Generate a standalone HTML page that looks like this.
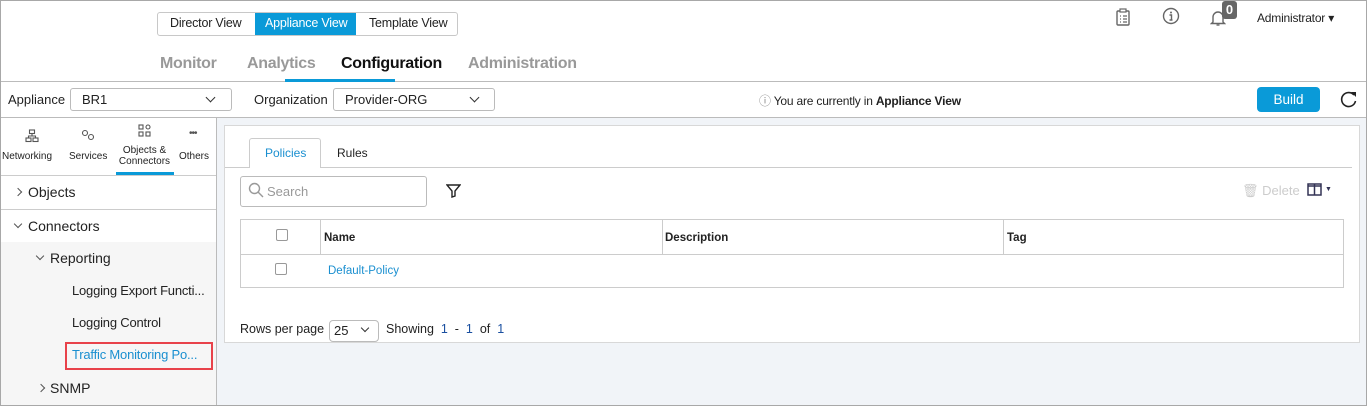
<!DOCTYPE html>
<html><head><meta charset="utf-8"><style>
*{box-sizing:border-box;margin:0;padding:0}
body{width:1367px;height:406px;overflow:hidden;font-family:"Liberation Sans",sans-serif;color:#222;background:#fff;position:relative}
.a{position:absolute}
.frame{left:0;top:0;width:1367px;height:406px;border:1px solid #a8a8a8;pointer-events:none;z-index:9}
.t{font-size:13px;white-space:nowrap}
.sel{border:1px solid #bbb;border-radius:3px;background:#fff}
.chev{width:7px;height:7px;border-right:1.5px solid #333;border-bottom:1.5px solid #333;transform:rotate(45deg)}
.chr{width:6px;height:6px;border-right:1px solid #555;border-bottom:1px solid #555;transform:rotate(-45deg)}
.chd{width:6px;height:6px;border-right:1px solid #555;border-bottom:1px solid #555;transform:rotate(45deg)}
.cb{width:12px;height:12px;border:1px solid #999;border-radius:2px;background:#fff}
</style></head><body>
<div class="a frame"></div>
<div class="a" style="left:157px;top:12px;width:301px;height:24px;border:1px solid #c8c8c8;border-radius:3px"></div>
<div class="a" style="left:255px;top:13px;width:101px;height:22px;background:#0a9ad8"></div>
<div class="a t" style="left:170px;top:16px;font-size:12.5px;letter-spacing:-0.2px">Director View</div>
<div class="a t" style="left:265px;top:16px;font-size:12.5px;letter-spacing:-0.2px;color:#fff">Appliance View</div>
<div class="a t" style="left:369px;top:16px;font-size:12.5px;letter-spacing:-0.2px">Template View</div>
<svg class="a" style="left:1115px;top:8px" width="16" height="18" viewBox="0 0 16 18"><rect x="2" y="3" width="12" height="14" rx="1" fill="none" stroke="#666" stroke-width="1.4"/><rect x="5" y="1" width="6" height="3" fill="#fff" stroke="#666" stroke-width="1.2"/><path d="M5 8h1M8 8h4M5 11h1M8 11h4M5 14h1M8 14h4" stroke="#666" stroke-width="1.2"/></svg>
<svg class="a" style="left:1162px;top:7px" width="18" height="18" viewBox="0 0 18 18"><circle cx="9" cy="9" r="7.5" fill="none" stroke="#666" stroke-width="1.4"/><circle cx="9" cy="5.5" r="1" fill="#666"/><path d="M7.5 8h2v5M7.5 13h3" stroke="#666" stroke-width="1.4" fill="none"/></svg>
<svg class="a" style="left:1210px;top:9px" width="16" height="18" viewBox="0 0 16 18"><path d="M3 13V8a5 5 0 0 1 10 0v5l1.5 1.5h-13z" fill="none" stroke="#666" stroke-width="1.4"/><path d="M6.5 16h3" stroke="#666" stroke-width="1.4"/></svg>
<div class="a" style="left:1222px;top:1px;width:15px;height:18px;background:#666;border-radius:3px;color:#fff;font-weight:bold;font-size:13px;text-align:center;line-height:18px">0</div>
<div class="a t" style="left:1257px;top:11px;font-size:12px;letter-spacing:-0.2px">Administrator ▾</div>
<div class="a" style="left:160px;top:55px;font-size:16px;font-weight:bold;color:#999;letter-spacing:-0.3px">Monitor</div>
<div class="a" style="left:247px;top:55px;font-size:16px;font-weight:bold;color:#999;letter-spacing:-0.3px">Analytics</div>
<div class="a" style="left:341px;top:55px;font-size:16px;font-weight:bold;color:#111;letter-spacing:-0.3px">Configuration</div>
<div class="a" style="left:468px;top:55px;font-size:16px;font-weight:bold;color:#999;letter-spacing:-0.3px">Administration</div>
<div class="a" style="left:0;top:81px;width:1367px;height:1px;background:#bbb"></div>
<div class="a" style="left:285px;top:79px;width:110px;height:3px;background:#0a9ad8"></div>
<div class="a t" style="left:8px;top:92px">Appliance</div>
<div class="a sel" style="left:70px;top:88px;width:162px;height:23px"></div>
<div class="a t" style="left:82px;top:92px">BR1</div>
<div class="a chev" style="left:207px;top:94px"></div>
<div class="a t" style="left:254px;top:92px">Organization</div>
<div class="a sel" style="left:333px;top:88px;width:162px;height:23px"></div>
<div class="a t" style="left:345px;top:92px">Provider-ORG</div>
<div class="a chev" style="left:471px;top:94px"></div>
<div class="a t" style="left:759px;top:92px;font-size:12px;letter-spacing:-0.2px"><span style="color:#888">ⓘ</span> You are currently in <b>Appliance View</b></div>
<div class="a" style="left:1257px;top:87px;width:63px;height:25px;background:#0a9ad8;border-radius:4px;color:#fff;font-size:13.5px;text-align:center;line-height:25px">Build</div>
<svg class="a" style="left:1339px;top:89px" width="20" height="20" viewBox="0 0 20 20"><path d="M15 6A7 7 0 1 0 16.5 12" fill="none" stroke="#222" stroke-width="1.6"/><path d="M12 3h5v5z" fill="#222"/></svg>
<div class="a" style="left:0;top:117px;width:1367px;height:1px;background:#bbb"></div>
<div class="a" style="left:216px;top:118px;width:1px;height:288px;background:#bbb"></div>
<div class="a" style="left:217px;top:118px;width:1150px;height:288px;background:#f1f4f8"></div>
<svg class="a" style="left:25px;top:129px" width="14" height="14" viewBox="0 0 14 14" fill="none" stroke="#555" stroke-width="1.1"><rect x="4.5" y="1" width="5" height="3.5"/><rect x="1" y="9" width="5" height="3.5"/><rect x="8" y="9" width="5" height="3.5"/><path d="M7 4.5v2.5M3.5 9V7h7v2"/></svg>
<svg class="a" style="left:80px;top:128px" width="16" height="14" viewBox="0 0 16 14" fill="none" stroke="#555" stroke-width="1.1"><circle cx="5" cy="5" r="2.5"/><circle cx="11" cy="9" r="2.5"/></svg>
<svg class="a" style="left:138px;top:124px" width="14" height="14" viewBox="0 0 14 14" fill="none" stroke="#555" stroke-width="1.1"><rect x="1" y="1" width="4" height="4"/><rect x="1" y="8" width="4" height="4"/><rect x="8" y="8" width="4" height="4"/><circle cx="10" cy="3" r="2"/></svg>
<div class="a" style="left:189px;top:128px;font-size:10px;color:#555;letter-spacing:-1px">•••</div>
<div class="a" style="left:2px;top:151px;font-size:10px">Networking</div>
<div class="a" style="left:69px;top:151px;font-size:10px">Services</div>
<div class="a" style="left:116px;top:145px;font-size:10px;text-align:center;line-height:11px;width:57px">Objects &amp;<br>Connectors</div>
<div class="a" style="left:179px;top:151px;font-size:10px">Others</div>
<div class="a" style="left:116px;top:172px;width:58px;height:3px;background:#0a9ad8"></div>
<div class="a" style="left:0;top:175px;width:216px;height:1px;background:#ccc"></div>
<div class="a chr" style="left:15px;top:189px"></div>
<div class="a" style="left:28px;top:184px;font-size:14px">Objects</div>
<div class="a" style="left:0;top:209px;width:216px;height:1px;background:#ccc"></div>
<div class="a chd" style="left:15px;top:221px"></div>
<div class="a" style="left:28px;top:218px;font-size:14px">Connectors</div>
<div class="a" style="left:1px;top:242px;width:215px;height:163px;background:#f6f6f6"></div>
<div class="a chd" style="left:37px;top:253px"></div>
<div class="a" style="left:50px;top:250px;font-size:14px">Reporting</div>
<div class="a" style="left:72px;top:283px;font-size:13px;letter-spacing:-0.2px">Logging Export Functi...</div>
<div class="a" style="left:72px;top:315px;font-size:13px;letter-spacing:-0.2px">Logging Control</div>
<div class="a" style="left:65px;top:342px;width:148px;height:28px;border:2px solid #e8424a"></div>
<div class="a" style="left:72px;top:347px;font-size:13px;letter-spacing:-0.2px;color:#1a8fd0">Traffic Monitoring Po...</div>
<div class="a chr" style="left:38px;top:385px"></div>
<div class="a" style="left:50px;top:380px;font-size:14px">SNMP</div>
<div class="a" style="left:224px;top:125px;width:1136px;height:218px;background:#fff;border:1px solid #d8d8d8"></div>
<div class="a" style="left:225px;top:167px;width:1127px;height:1px;background:#ccc"></div>
<div class="a" style="left:249px;top:138px;width:72px;height:30px;border:1px solid #ccc;border-bottom:none;border-radius:3px 3px 0 0;background:#fff"></div>
<div class="a" style="left:265px;top:146px;font-size:12px;color:#1a8fd0">Policies</div>
<div class="a" style="left:337px;top:146px;font-size:12px">Rules</div>
<div class="a" style="left:240px;top:176px;width:187px;height:31px;border:1px solid #bbb;border-radius:3px"></div>
<svg class="a" style="left:248px;top:182px" width="16" height="16" viewBox="0 0 16 16" fill="none" stroke="#999" stroke-width="1.4"><circle cx="6.5" cy="6.5" r="5"/><path d="M10 10l5 5"/></svg>
<div class="a" style="left:267px;top:184px;font-size:13px;color:#999">Search</div>
<svg class="a" style="left:446px;top:184px" width="15" height="14" viewBox="0 0 15 14" fill="none" stroke="#222" stroke-width="1.4"><path d="M1 1h13L9 7v5l-3 1V7z"/></svg>
<div class="a t" style="left:1242px;top:183px;color:#ccc">🗑 Delete</div>
<svg class="a" style="left:1307px;top:183px" width="15" height="13" viewBox="0 0 15 13" fill="none" stroke="#335" stroke-width="1.5"><rect x="1" y="1" width="13" height="11"/><path d="M7.5 1v11M1 3h13"/></svg>
<div class="a" style="left:1325px;top:186px;font-size:7px;color:#335">▼</div>
<div class="a" style="left:240px;top:219px;width:1104px;height:69px;border:1px solid #ccc"></div>
<div class="a" style="left:241px;top:254px;width:1102px;height:1px;background:#ccc"></div>
<div class="a" style="left:320px;top:220px;width:1px;height:34px;background:#ccc"></div>
<div class="a" style="left:662px;top:220px;width:1px;height:34px;background:#ccc"></div>
<div class="a" style="left:1003px;top:220px;width:1px;height:34px;background:#ccc"></div>
<div class="a cb" style="left:276px;top:229px"></div>
<div class="a cb" style="left:275px;top:263px"></div>
<div class="a" style="left:324px;top:232px;font-size:11.5px;font-weight:bold">Name</div>
<div class="a" style="left:665px;top:232px;font-size:11.5px;font-weight:bold">Description</div>
<div class="a" style="left:1007px;top:232px;font-size:11.5px;font-weight:bold">Tag</div>
<div class="a" style="left:328px;top:265px;font-size:11.5px;color:#1a8fd0">Default-Policy</div>
<div class="a t" style="left:240px;top:322px;font-size:12.5px">Rows per page</div>
<div class="a" style="left:329px;top:320px;width:50px;height:22px;border:1px solid #bbb;border-radius:4px"></div>
<div class="a t" style="left:334px;top:323px;font-size:13px">25</div>
<div class="a chd" style="left:362px;top:325px;border-color:#333"></div>
<div class="a t" style="left:386px;top:322px;font-size:12.5px">Showing &nbsp;<span style="color:#1a4fa0">1</span> &nbsp;- &nbsp;<span style="color:#1a4fa0">1</span> &nbsp;of &nbsp;<span style="color:#1a4fa0">1</span></div>
</body></html>
